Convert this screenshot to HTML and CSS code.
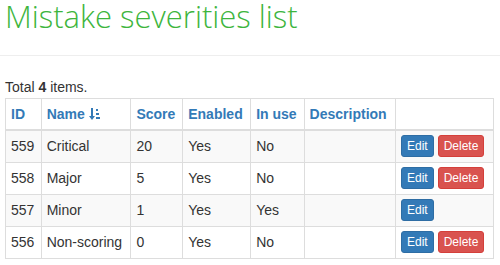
FILE: index.html
```html
<!DOCTYPE html>
<html lang="en">
<head>
    <meta charset="UTF-8">
    <meta name="viewport" content="width=device-width, initial-scale=1.0">
    <title>Mistake severities list</title>
    <link rel="stylesheet" href="styles.css">
</head>
<body>
    <div class="container">
        <div class="page-header">
            <h1>Mistake severities list</h1>
        </div>

        <div class="summary">Total <b>4</b> items.</div>

        <table class="grid">
            <thead>
                <tr>
                    <th><a href="#">ID</a></th>
                    <th><a href="#">Name <svg class="sort-icon" width="11" height="12" viewBox="0 0 11 12"><path d="M2 0h2v8h2l-3 4-3-4h2z" fill="#337ab7"/><rect x="7" y="1" width="2" height="2" fill="#337ab7"/><rect x="7" y="5" width="3" height="2" fill="#337ab7"/><rect x="7" y="9" width="4" height="2" fill="#337ab7"/></svg></a></th>
                    <th><a href="#">Score</a></th>
                    <th><a href="#">Enabled</a></th>
                    <th><a href="#">In use</a></th>
                    <th><a href="#">Description</a></th>
                    <th></th>
                </tr>
            </thead>
            <tbody id="severity-list">
            </tbody>
        </table>
    </div>

    <script>
        const severities = [
            { id: 559, name: "Critical", score: 20, enabled: true, inUse: false },
            { id: 558, name: "Major", score: 5, enabled: true, inUse: false },
            { id: 557, name: "Minor", score: 1, enabled: true, inUse: true },
            { id: 556, name: "Non-scoring", score: 0, enabled: true, inUse: false }
        ];

        const list = document.getElementById("severity-list");

        severities.forEach(item => {
            const row = document.createElement("tr");
            let buttons = `<a href="#" class="btn btn-edit">Edit</a>`;
            if (!item.inUse) {
                buttons += `<a href="#" class="btn btn-delete">Delete</a>`;
            }
            row.innerHTML = `
                <td>${item.id}</td>
                <td>${item.name}</td>
                <td>${item.score}</td>
                <td>${item.enabled ? "Yes" : "No"}</td>
                <td>${item.inUse ? "Yes" : "No"}</td>
                <td></td>
                <td class="actions-cell"><div class="actions">${buttons}</div></td>
            `;
            list.appendChild(row);
        });
    </script>
</body>
</html>
```

FILE: styles.css
```css
* {
    box-sizing: border-box;
}

body {
    margin: 0;
    font-family: 'Liberation Sans', Arial, sans-serif;
    font-size: 14px;
    line-height: 20px;
    color: #333;
    background: #fff;
}

.container {
    padding: 0 6px 0 5px;
}

.page-header {
    border-bottom: 1px solid #eee;
    padding-bottom: 23px;
    margin: 0 -6px 21px -5px;
    padding-left: 5px;
}

h1 {
    margin: 0;
    font-family: 'Open Sans', sans-serif;
    font-weight: 300;
    font-size: 31px;
    line-height: 32px;
    color: #3db53d;
}

.summary {
    margin-bottom: 1px;
}

table.grid {
    width: 100%;
    border-collapse: collapse;
}

.grid th, .grid td {
    padding: 5px;
    text-align: left;
    vertical-align: top;
    border: 1px solid #ddd;
}

.grid th {
    border-bottom-width: 2px;
    font-weight: bold;
}

.grid th a {
    color: #337ab7;
    text-decoration: none;
}

.sort-icon {
    vertical-align: -1px;
}

.grid tbody tr:nth-child(odd) {
    background-color: #f9f9f9;
}

.grid td.actions-cell {
    padding: 4px 5px 5px;
}

.actions {
    display: flex;
    gap: 4px;
}

.btn {
    display: inline-block;
    padding: 1px 5px;
    font-size: 12px;
    line-height: 18px;
    border: 1px solid transparent;
    border-radius: 3px;
    color: #fff;
    text-decoration: none;
}

.btn-edit {
    background-color: #337ab7;
    border-color: #2e6da4;
}

.btn-delete {
    background-color: #d9534f;
    border-color: #d43f3a;
}
```
